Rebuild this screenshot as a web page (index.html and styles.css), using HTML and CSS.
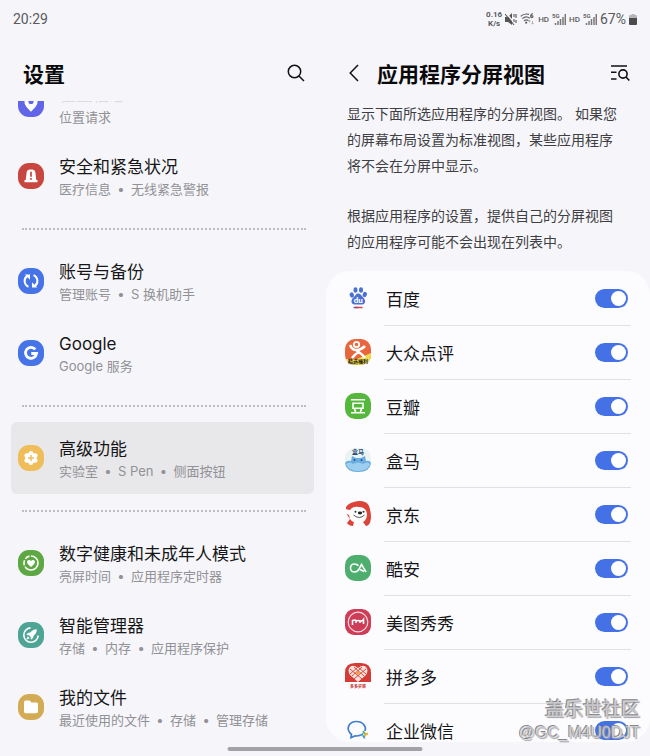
FILE: index.html
```html
<!DOCTYPE html>
<html lang="zh-CN">
<head>
<meta charset="utf-8">
<meta name="viewport" content="width=device-width, initial-scale=1">
<title>应用程序分屏视图</title>
<link rel="stylesheet" href="styles.css">
</head>
<body>
<div class="status">
  <time class="clock">20:29</time>
  <div class="indicators">
    <span class="speed"><span>0.16</span><span>K/s</span></span>
    <svg class="mute" width="12" height="14" viewBox="0 0 12 14"><path d="M0 5h3l4-4v12L3 10H0z" fill="#555"/><path d="M1 1l10 12" stroke="#f6f6fa" stroke-width="1.500"/><path d="M0 2l9 11" stroke="#555" stroke-width="1.100"/><path d="M9 2v3M11 2v4M9 7v3M11 8v3" stroke="#555" stroke-width="1.100"/></svg>
    <svg class="wifi" width="15" height="12" viewBox="0 0 15 12"><g fill="none" stroke="#666" stroke-width="1.200"><path d="M.7 3.400C3 1 6 .6 9 1.400"/><path d="M2.300 5.600C4.600 3.600 7.500 3.400 9.800 5.200"/><path d="M4 7.700c1.600-1.200 3.200-1.200 4.600 0"/><path d="M13 .7c-2 .2-2.500 1.600-2.300 3 .2 1.400 2.200 1.300 2.200-.1s-1.800-1.300-2.200-.2"/></g><circle cx="6.200" cy="9.700" r="1.100" fill="#666"/><path d="M9.500 9.500V7.200M8.500 8.300l1-1.200 1 1.200M12.500 8v3M11.500 10l1 1.200 1-1.200" stroke="#b2b2b6" fill="none"/></svg>
    <span class="hd">HD</span>
    <svg class="signal" width="14" height="12" viewBox="0 0 14 12"><text x="0" y="5" class="fiveg">5G</text><path d="M3.500 12v-2M6 12V8M8.500 12V6M11 12V4M13.300 12V1" stroke="#777" stroke-width="1.500"/></svg>
    <span class="hd">HD</span>
    <svg class="signal" width="14" height="12" viewBox="0 0 14 12"><text x="0" y="5" class="fiveg">5G</text><path d="M3.500 12v-2M6 12V8M8.500 12V6M11 12V4M13.300 12V1" stroke="#777" stroke-width="1.500"/></svg>
    <span class="percent">67%</span>
    <svg class="battery" width="8" height="11" viewBox="0 0 8 11"><path d="M2.500 0h3v1H7q1 0 1 1v2H0V2q0-1 1-1h1.500z" fill="#b5b5b8"/><path d="M0 4h8v6q0 1-1 1H1q-1 0-1-1z" fill="#4c4c4e"/></svg>
  </div>
</div>

<div class="panes">
  <nav class="pane settings">
    <header class="bar">
      <h1>设置</h1>
      <button class="tool" aria-label="搜索"><svg width="18" height="18" viewBox="0 0 18 18" fill="none" stroke="#111" stroke-width="1.500"><circle cx="7.500" cy="7.500" r="6.200"/><path d="M12 12l5 5"/></svg></button>
    </header>
    <div class="scroll">
      <div class="list">
        <a class="item passing" href="#">
          <svg class="icon" viewBox="0 0 26 26"><rect width="26" height="26" rx="11" fill="#6265e8"/><path d="M13 5c-4 0-6.500 2.800-6.500 6 0 4 4 7 6.500 9.700 2.500-2.700 6.500-5.700 6.500-9.700 0-3.200-2.500-6-6.500-6z" fill="#fff"/><circle cx="13" cy="10.500" r="2.600" fill="#6265e8"/></svg>
          <span class="words"><span class="name">位置信息</span><span class="sub"><span>位置请求</span></span></span>
        </a>
        <a class="item" href="#">
          <svg class="icon" viewBox="0 0 26 26"><rect width="26" height="26" rx="11" fill="#c74640"/><path d="M7.700 17L8.700 9q.4-2.500 2.800-2.500h3q2.400 0 2.800 2.500l1 8h1.200v2.300h-13V17z" fill="#fff"/><path d="M13 8.800v5M13 15v1.800" stroke="#c74640" stroke-width="1.700"/></svg>
          <span class="words"><span class="name">安全和紧急状况</span><span class="sub"><span>医疗信息</span><span>无线紧急警报</span></span></span>
        </a>
        <hr>
        <a class="item" href="#">
          <svg class="icon" viewBox="0 0 26 26"><rect width="26" height="26" rx="11" fill="#4674e8"/><g fill="none" stroke="#fff" stroke-width="2"><path d="M10.500 18.800C5.500 16.500 5.500 10 9.500 8"/><path d="M15.500 7.200c5 2.300 5 8.800 1 10.800"/></g><path d="M6.800 6.500h5.200v5.200zM19.200 19.500h-5.200v-5.200z" fill="#fff"/></svg>
          <span class="words"><span class="name">账号与备份</span><span class="sub"><span>管理账号</span><span>S 换机助手</span></span></span>
        </a>
        <a class="item" href="#">
          <svg class="icon" viewBox="0 0 26 26"><rect width="26" height="26" rx="11" fill="#4674e8"/><path d="M17.300 9.300A5.500 5.500 0 1 0 18.500 13.500H13.300" fill="none" stroke="#fff" stroke-width="2.800"/></svg>
          <span class="words"><span class="name">Google</span><span class="sub"><span>Google 服务</span></span></span>
        </a>
        <hr>
        <a class="item selected" href="#" aria-current="page">
          <svg class="icon" viewBox="0 0 26 26"><rect width="26" height="26" rx="11" fill="#f0bd5b"/><g fill="#fff"><circle cx="13" cy="13" r="5.500"/><circle cx="13" cy="8.300" r="2.300"/><circle cx="13" cy="17.700" r="2.300"/><circle cx="8.700" cy="10.600" r="2.300"/><circle cx="17.300" cy="10.600" r="2.300"/><circle cx="8.700" cy="15.400" r="2.300"/><circle cx="17.300" cy="15.400" r="2.300"/></g><path d="M13 10v6M10 13h6" stroke="#f0bd5b" stroke-width="1.400"/></svg>
          <span class="words"><span class="name">高级功能</span><span class="sub"><span>实验室</span><span>S Pen</span><span>侧面按钮</span></span></span>
        </a>
        <hr>
        <a class="item" href="#">
          <svg class="icon" viewBox="0 0 26 26"><rect width="26" height="26" rx="11" fill="#5da843"/><circle cx="13" cy="13" r="7" fill="none" stroke="#fff" stroke-width="1.600" stroke-dasharray="29 1.600 5 1.600 5 1.780" transform="rotate(-90 13 13)"/><path d="M13 17c-2-1.500-4-3-4-4.900C9 9.800 11.800 9.200 13 11c1.200-1.800 4-1.200 4 1.100 0 1.900-2 3.400-4 4.900z" fill="#fff"/></svg>
          <span class="words"><span class="name">数字健康和未成年人模式</span><span class="sub"><span>亮屏时间</span><span>应用程序定时器</span></span></span>
        </a>
        <a class="item" href="#">
          <svg class="icon" viewBox="0 0 26 26"><rect width="26" height="26" rx="11" fill="#4fa595"/><path d="M12.500 5.900a7.200 7.200 0 1 0 7.700 7.600" fill="none" stroke="#fff" stroke-width="1.600"/><path d="M18.800 7.200c-3.200 0-5 1.300-6.500 3.300l-2.500.6-1.500 2 2.700.2 1.700 1.700.2 2.800 2.100-1.700.6-2.400c2-1.600 3.300-3.300 3.200-6.500zM9.800 14.300l-1.600 3.500 3.500-1.600z" fill="#fff"/></svg>
          <span class="words"><span class="name">智能管理器</span><span class="sub"><span>存储</span><span>内存</span><span>应用程序保护</span></span></span>
        </a>
        <a class="item" href="#">
          <svg class="icon" viewBox="0 0 26 26"><rect width="26" height="26" rx="11" fill="#d3ab55"/><path d="M6 8q0-1.500 1.500-1.500h3.700q.8 0 1.300.8l.9 1.200h5.100Q20 8.500 20 10v7.500q0 1.700-1.700 1.700H7.700Q6 19.200 6 17.500z" fill="#fff"/></svg>
          <span class="words"><span class="name">我的文件</span><span class="sub"><span>最近使用的文件</span><span>存储</span><span>管理存储</span></span></span>
        </a>
      </div>
    </div>
  </nav>

  <main class="pane detail">
    <header class="bar">
      <button class="tool" aria-label="返回"><svg width="10" height="18" viewBox="0 0 10 18" fill="none" stroke="#111" stroke-width="1.500"><path d="M9 1L1.200 9 9 17"/></svg></button>
      <h1>应用程序分屏视图</h1>
      <button class="tool" aria-label="搜索列表"><svg width="20" height="18" viewBox="0 0 20 18" fill="none" stroke="#111" stroke-width="1.600"><path d="M1 2h16M1 8.300h5.500M1 15h5.500"/><circle cx="13" cy="10" r="4.100"/><path d="M16 13l3.300 3.500"/></svg></button>
    </header>
    <div class="intro">
      <p>显示下面所选应用程序的分屏视图。 如果您的屏幕布局设置为标准视图，某些应用程序将不会在分屏中显示。</p>
      <p>根据应用程序的设置，提供自己的分屏视图的应用程序可能不会出现在列表中。</p>
    </div>
    <div class="card">
      <label class="app">
        <svg class="icon" viewBox="0 0 26 26"><g fill="#4b70d3"><ellipse cx="6.800" cy="10" rx="2.100" ry="2.700" transform="rotate(-15 6.800 10)"/><ellipse cx="10.500" cy="5" rx="2" ry="2.800"/><ellipse cx="16" cy="5" rx="2" ry="2.800"/><ellipse cx="19.800" cy="9.500" rx="2.100" ry="2.700" transform="rotate(15 19.800 9.500)"/><path d="M13.200 8.500c2.500 0 3 2.200 5 4 2.700 2.200 2.800 6.700-1 6.900-2 .1-5.500.1-7.700 0-4-.2-3.700-4.900-1-6.900 2.200-1.800 2.200-4 4.700-4z"/></g><text x="13.200" y="17.500" class="mark du">du</text><path d="M8.500 22.500H13" stroke="#5267b8" stroke-width="1.500"/><path d="M10 22.500h7.500" stroke="#cc4450" stroke-width="1.500"/></svg>
        <span class="title">百度</span><input type="checkbox" role="switch" checked>
      </label>
      <label class="app">
        <svg class="icon" viewBox="0 0 26 26"><defs><clipPath id="c"><rect width="26" height="26" rx="10"/></clipPath></defs><g clip-path="url(#c)"><path d="M0 0h26v26H0z" fill="#e8663e"/><path d="M0 20h12l14-6v12H0z" fill="#f1de4c"/><circle cx="11.500" cy="5.500" r="2.700" fill="none" stroke="#fff" stroke-width="1.800"/><path d="M5 6q2 5 6 5 5 0 9-4M11 11l4 3q3 2 5 5M14 13q-4 2-7 6" fill="none" stroke="#fff" stroke-width="2.500"/></g><text x="13" y="24" class="mark tag">精选福利</text></svg>
        <span class="title">大众点评</span><input type="checkbox" role="switch" checked>
      </label>
      <label class="app">
        <svg class="icon" viewBox="0 0 26 26"><rect width="26" height="26" rx="10" fill="#55b83c"/><g fill="none" stroke="#fff" stroke-width="1.600"><path d="M6 6.800h14M8 10.300h10v4.900H8zM9.500 15.500l1 3.500M16.500 15.500l-1 3.500M6 19.700h14"/></g></svg>
        <span class="title">豆瓣</span><input type="checkbox" role="switch" checked>
      </label>
      <label class="app">
        <svg class="icon" viewBox="0 0 26 26"><rect y="1" width="26" height="24" rx="10" fill="#e9f3f1"/><path d="M0 16q2-3 6-2l1-5 4 2h5l4-2 1 5q4-1 5 2-1 9-13 9T0 16z" fill="#6badde"/><path d="M1 17q4-3 7 0 5-3 10 0 4-3 7 0-2 7-12 7T1 17z" fill="#9cceef"/><path d="M9.500 12v2M16.500 12v2" stroke="#2459a0" stroke-width="1.500"/><text x="13" y="7" class="mark hema">盒马</text></svg>
        <span class="title">盒马</span><input type="checkbox" role="switch" checked>
      </label>
      <label class="app">
        <svg class="icon" viewBox="0 0 26 26"><path d="M1 6Q4 1 14 0q8 0 10 5 2 5 2 12-1 8-5 8l-3-4H9l-1 4q-4 0-6-3l3-4-4-6z" fill="#dc4339"/><path d="M0 8l5 1Q8 5 14 6q7 0 8 7 0 9-9 9-8 0-9-8L0 12z" fill="#fff"/><circle cx="10.500" cy="10.800" r="1" fill="#333"/><circle cx="18.500" cy="10.800" r="1" fill="#333"/><ellipse cx="15" cy="12" rx="2.200" ry="1.400" fill="#222"/><path d="M8.500 14q6 5 11 0" fill="none" stroke="#444" stroke-width=".9"/></svg>
        <span class="title">京东</span><input type="checkbox" role="switch" checked>
      </label>
      <label class="app">
        <svg class="icon" viewBox="0 0 26 26"><rect width="26" height="26" rx="10" fill="#4eae6d"/><path d="M13.500 10.800Q12 9 9.500 9a4 4 0 0 0 0 8q2.500 0 4-2L16.500 9.300l4.500 7.700M15 14.500l4 2" fill="none" stroke="#fff" stroke-width="1.600"/></svg>
        <span class="title">酷安</span><input type="checkbox" role="switch" checked>
      </label>
      <label class="app">
        <svg class="icon" viewBox="0 0 26 26"><rect width="26" height="26" rx="9" fill="#ce3d57"/><circle cx="13" cy="13" r="9.800" fill="none" stroke="#fbdce1" stroke-width="1.200"/><path d="M7.500 16v-4.500q3-.8 3.500 0V14M11 12q2.500-1 4 0 2 .5 3.500-1.500V15M15 12v2" fill="none" stroke="#fff" stroke-width="1.600"/></svg>
        <span class="title">美图秀秀</span><input type="checkbox" role="switch" checked>
      </label>
      <label class="app">
        <svg class="icon" viewBox="0 0 26 26"><path d="M0 19V10Q0 0 10 0h6q10 0 10 10v9z" fill="#d53b36"/><path d="M13 19L5 12Q2 7 5 4t8 1q5-4 8-1t0 8z" fill="#fae1dc"/><path d="M5 6l12 10M9 4l10 9M14 5l7 6M21 6L9 16M17 4L7 13M12 5l-7 6" stroke="#d53b36" stroke-width=".9"/><circle cx="13" cy="10" r="1.800" fill="#eea13f"/><text x="13" y="24.500" class="mark cash">多多买菜</text></svg>
        <span class="title">拼多多</span><input type="checkbox" role="switch" checked>
      </label>
      <label class="app">
        <svg class="icon" viewBox="0 0 26 26"><path d="M15 18.300q-2 .9-5 .6l-4 1.800.5-3.200C0 12 4 4.500 11.500 4.500 18 4.500 21.500 9.500 20 14" fill="none" stroke="#3f7cc9" stroke-width="1.700"/><path d="M18 14q1 2.500 3 3.300" stroke="#58ad55" stroke-width="1.800" fill="none"/><path d="M23 16.500q-3 .7-3.500 3" stroke="#edb43c" stroke-width="2" fill="none"/><path d="M14.500 18.500q2.500-.5 3.500-2M19.500 21.500q0-2-2-3" stroke="#438bd2" stroke-width="1.600" fill="none"/></svg>
        <span class="title">企业微信</span><input type="checkbox" role="switch" checked>
      </label>
    </div>
  </main>
</div>
<div class="handle"></div>
<div class="watermark"><span class="site">盖乐世社区</span><span class="user">@GC_M4U0DJT</span></div>
</body>
</html>
```
FILE: styles.css
```css
* { box-sizing: border-box; }

body {
  margin: 0;
  height: 100vh;
  display: flex;
  flex-direction: column;
  overflow: hidden;
  position: relative;
  background: #f6f6fa;
  color: #161618;
  font-family: Inter, "Noto Sans CJK SC", sans-serif;
}

.status {
  height: 38px;
  flex: none;
  display: flex;
  align-items: center;
  justify-content: space-between;
  padding: 0 13px;
  color: #5a5a5d;
  font-family: Roboto, sans-serif;
}
.clock { font-size: 14px; }
.indicators { display: flex; align-items: center; gap: 3px; }
.speed {
  display: flex;
  flex-direction: column;
  align-items: center;
  font-size: 8px;
  line-height: 9px;
  font-weight: 700;
}
.hd { font-size: 8px; font-weight: 500; }
.fiveg { font-size: 6px; font-weight: 700; fill: #666; }
.percent { font-size: 14px; }

.panes { flex: 1; min-height: 0; display: flex; }
.pane { flex: 1; min-width: 0; display: flex; flex-direction: column; }

.bar {
  height: 63px;
  flex: none;
  display: flex;
  align-items: center;
  padding: 6px 20px 0 23px;
}
h1 {
  flex: 1;
  margin: 0;
  padding-top: 4px;
  font-size: 21px;
  line-height: 32px;
  font-weight: 700;
  color: #0a0a0c;
}
.tool { display: flex; padding: 0; border: 0; background: none; }

.scroll { flex: 1; min-height: 0; overflow: hidden; }
.list { margin-top: -33px; padding: 0 11px; }
.item {
  height: 72px;
  display: flex;
  align-items: center;
  gap: 15px;
  padding: 0 7px;
  border-radius: 6px;
  color: inherit;
  text-decoration: none;
}
.selected { background: #e8e8ea; }
.icon { width: 26px; height: 26px; flex: none; }
.words { display: flex; flex-direction: column; padding-top: 2px; }
.name { font-size: 17px; line-height: 24px; }
.passing .name { color: #dcdce0; }
.sub { display: flex; font-size: 13px; line-height: 20px; color: #919196; }
.sub span + span::before { content: "•"; display: inline-block; width: 20px; text-align: center; }
hr {
  height: 2px;
  margin: 16px 8px 15px 11px;
  border: 0;
  border-top: 2px dotted #bdbdc3;
}

.detail .bar { gap: 18px; padding-left: 24px; }
.intro { padding: 0 27px 0 22px; font-size: 14px; line-height: 26px; color: #3e3e43; }
.intro p { margin: 0 0 24px; }
.intro p:last-child { margin-bottom: 16px; }

.card {
  flex: 1;
  min-height: 0;
  margin: 0 0 14px 1px;
  overflow: hidden;
  border-radius: 24px;
  background: #fcfcff;
}
.app {
  height: 54px;
  display: flex;
  align-items: center;
  gap: 15px;
  padding: 0 22px 0 19px;
  position: relative;
}
.app + .app::before {
  content: "";
  position: absolute;
  top: 0;
  left: 58px;
  right: 19px;
  border-top: 1px solid #e0e0e5;
}
.title { flex: 1; font-size: 17px; }
.app input {
  appearance: none;
  width: 33px;
  height: 19px;
  margin: 0;
  padding: 2px;
  display: flex;
  justify-content: flex-end;
  border-radius: 10px;
  background: #4472e6;
}
.app input::before { content: ""; width: 15px; height: 15px; border-radius: 50%; background: #fff; }

.mark { text-anchor: middle; font-family: "Noto Sans CJK SC", sans-serif; font-weight: 700; }
.du { font-family: Roboto, sans-serif; font-size: 8px; fill: #fff; }
.tag { font-size: 5px; fill: #1d1a10; }
.hema { font-size: 6px; fill: #264673; }
.cash { font-size: 4px; fill: #c83432; }

.handle {
  position: absolute;
  bottom: 5px;
  left: 50%;
  width: 30%;
  height: 4px;
  border-radius: 2px;
  background: #a3a3a5;
  transform: translateX(-50%);
}
.watermark {
  position: absolute;
  right: 10px;
  bottom: 12px;
  display: flex;
  flex-direction: column;
  align-items: flex-end;
  color: rgba(214, 214, 218, 0.8);
  text-shadow: -1px -1px 0 #88888c, 1px 1px 1px #a0a0a4;
  pointer-events: none;
}
.site { font-size: 19px; line-height: 25px; font-weight: 500; }
.user { font-family: "Liberation Sans", sans-serif; font-size: 16px; line-height: 22px; }
```
